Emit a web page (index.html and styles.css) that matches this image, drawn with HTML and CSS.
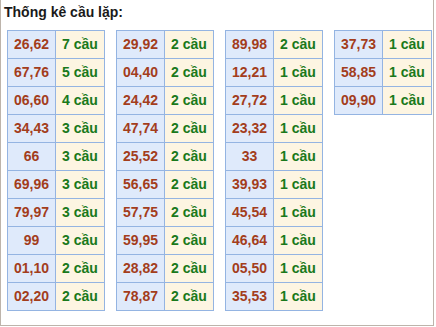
FILE: index.html
```html
<!DOCTYPE html>
<html lang="vi">
<head>
<meta charset="utf-8">
<link rel="stylesheet" href="styles.css">
</head>
<body>
<div class="box">
  <div class="title">Thống kê cầu lặp:</div>
  <div class="tables">
    <table class="stat">
      <tr><td class="num">26,62</td><td class="cnt">7 cầu</td></tr>
      <tr><td class="num">67,76</td><td class="cnt">5 cầu</td></tr>
      <tr><td class="num">06,60</td><td class="cnt">4 cầu</td></tr>
      <tr><td class="num">34,43</td><td class="cnt">3 cầu</td></tr>
      <tr><td class="num">66</td><td class="cnt">3 cầu</td></tr>
      <tr><td class="num">69,96</td><td class="cnt">3 cầu</td></tr>
      <tr><td class="num">79,97</td><td class="cnt">3 cầu</td></tr>
      <tr><td class="num">99</td><td class="cnt">3 cầu</td></tr>
      <tr><td class="num">01,10</td><td class="cnt">2 cầu</td></tr>
      <tr><td class="num">02,20</td><td class="cnt">2 cầu</td></tr>
    </table>
    <table class="stat">
      <tr><td class="num">29,92</td><td class="cnt">2 cầu</td></tr>
      <tr><td class="num">04,40</td><td class="cnt">2 cầu</td></tr>
      <tr><td class="num">24,42</td><td class="cnt">2 cầu</td></tr>
      <tr><td class="num">47,74</td><td class="cnt">2 cầu</td></tr>
      <tr><td class="num">25,52</td><td class="cnt">2 cầu</td></tr>
      <tr><td class="num">56,65</td><td class="cnt">2 cầu</td></tr>
      <tr><td class="num">57,75</td><td class="cnt">2 cầu</td></tr>
      <tr><td class="num">59,95</td><td class="cnt">2 cầu</td></tr>
      <tr><td class="num">28,82</td><td class="cnt">2 cầu</td></tr>
      <tr><td class="num">78,87</td><td class="cnt">2 cầu</td></tr>
    </table>
    <table class="stat">
      <tr><td class="num">89,98</td><td class="cnt">2 cầu</td></tr>
      <tr><td class="num">12,21</td><td class="cnt">1 cầu</td></tr>
      <tr><td class="num">27,72</td><td class="cnt">1 cầu</td></tr>
      <tr><td class="num">23,32</td><td class="cnt">1 cầu</td></tr>
      <tr><td class="num">33</td><td class="cnt">1 cầu</td></tr>
      <tr><td class="num">39,93</td><td class="cnt">1 cầu</td></tr>
      <tr><td class="num">45,54</td><td class="cnt">1 cầu</td></tr>
      <tr><td class="num">46,64</td><td class="cnt">1 cầu</td></tr>
      <tr><td class="num">05,50</td><td class="cnt">1 cầu</td></tr>
      <tr><td class="num">35,53</td><td class="cnt">1 cầu</td></tr>
    </table>
    <table class="stat">
      <tr><td class="num">37,73</td><td class="cnt">1 cầu</td></tr>
      <tr><td class="num">58,85</td><td class="cnt">1 cầu</td></tr>
      <tr><td class="num">09,90</td><td class="cnt">1 cầu</td></tr>
    </table>
  </div>
</div>
</body>
</html>
```

FILE: styles.css
```css
html, body {
  margin: 0;
  padding: 0;
  background: #ffffff;
}

.box {
  box-sizing: border-box;
  width: 434px;
  height: 326px;
  border: 1px solid #bdb4ab;
  border-top: none;
  padding: 2px 3px 0 3px;
  font-family: "Liberation Sans", Arial, sans-serif;
}

.title {
  font-size: 14px;
  font-weight: bold;
  line-height: 20px;
  color: #1a1a1a;
}

.tables {
  display: flex;
  align-items: flex-start;
  gap: 11px;
  margin-top: 8px;
  padding-left: 3px;
}

.stat {
  border-collapse: separate;
  border-spacing: 0;
  border-top: 1px solid #94b4e2;
  border-left: 1px solid #94b4e2;
  width: 98px;
  table-layout: fixed;
}

.stat td {
  padding: 0;
  height: 27px;
  line-height: 27px;
  text-align: center;
  font-size: 14px;
  font-weight: bold;
  border-right: 1px solid #94b4e2;
  border-bottom: 1px solid #94b4e2;
}

.num {
  width: 47px;
  background: #dfeafb;
  color: #a33d1c;
}

.cnt {
  width: 48px;
  background: #fdf5e2;
  color: #19791b;
}
```
